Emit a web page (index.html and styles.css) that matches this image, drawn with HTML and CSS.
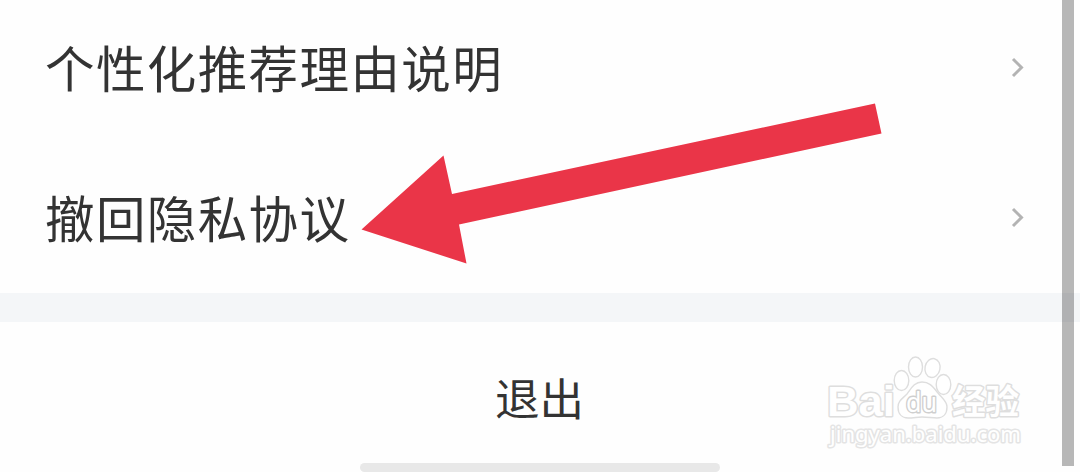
FILE: index.html
```html
<!DOCTYPE html>
<html lang="zh-CN">
<head>
<meta charset="utf-8">
<title>设置</title>
<link rel="stylesheet" href="styles.css">
</head>
<body>
<main class="screen">
  <ul class="list">
    <li class="row">
      <span class="label">个性化推荐理由说明</span>
      <svg class="chevron" viewBox="0 0 14 22"><path d="M2 2L10.500 10.500L2 19"/></svg>
    </li>
    <li class="row">
      <span class="label">撤回隐私协议</span>
      <svg class="chevron" viewBox="0 0 14 22"><path d="M2 2L10.500 10.500L2 19"/></svg>
    </li>
  </ul>
  <div class="divider"></div>
  <button class="logout">退出</button>
  <div class="home-bar"></div>
  <div class="scrollbar"></div>
  <svg class="arrow" viewBox="0 0 522 162"><path d="M0.500 126.500L82.500 52.500L91 91L514 0.500L520.500 30.500L98 121.500L105.500 160.500Z"/></svg>
  <svg class="watermark" viewBox="0 0 220 110">
    <text class="wm-latin" x="7" y="71" textLength="68" lengthAdjust="spacingAndGlyphs">Bai</text>
    <text class="wm-cn" x="132" y="69" textLength="67" lengthAdjust="spacingAndGlyphs">经验</text>
    <ellipse cx="81.500" cy="35.500" rx="7.300" ry="10"/>
    <ellipse cx="95.500" cy="22" rx="7" ry="10"/>
    <ellipse cx="112.500" cy="23" rx="7.500" ry="9.500" transform="rotate(12 112.500 23)"/>
    <ellipse cx="123.500" cy="39.500" rx="7.300" ry="10"/>
    <path d="M102 37C94 37 91 44 87 49C82 54 78 56 78 62C78 69 82 73 88 73C94 73 97 72 102 72C108 72 112 73 117 73C123 73 127 69 127 62C127 56 122 53 118 48C113 42 110 37 102 37Z"/>
    <text class="wm-du" x="86" y="66.500" textLength="31" lengthAdjust="spacingAndGlyphs">du</text>
    <text class="wm-url" x="10" y="97" textLength="191" lengthAdjust="spacingAndGlyphs">jingyan.baidu.com</text>
  </svg>
</main>
</body>
</html>
```
FILE: styles.css
```css
body {
  margin: 0;
  background: #fefefe;
}

.screen {
  position: relative;
  display: flex;
  flex-direction: column;
  width: 1080px;
  height: 472px;
  overflow: hidden;
  color: #333;
  font-family: "Noto Sans CJK SC", sans-serif;
}

.list {
  margin: -7px 0 0;
  padding: 0;
  list-style: none;
}

.row {
  display: flex;
  align-items: center;
  justify-content: space-between;
  box-sizing: border-box;
  height: 150px;
  padding: 0 55px 0 45px;
}

.label {
  padding-bottom: 2px;
  font-size: 49.5px;
  font-weight: 400;
  line-height: 72px;
  letter-spacing: 1.4px;
}

.chevron {
  width: 14px;
  height: 22px;
  fill: none;
  stroke: #b3b3b3;
  stroke-width: 3;
}

.divider {
  flex: none;
  height: 29px;
  background: #f4f6f8;
}

.logout {
  height: 141px;
  padding: 9px 1px 0 0;
  border: 0;
  background: none;
  color: inherit;
  font: 44.5px/64px "Noto Sans CJK SC", sans-serif;
}

.home-bar {
  flex: none;
  align-self: center;
  width: 360px;
  height: 9px;
  border-radius: 5px;
  background: #e8e8e8;
}

.scrollbar {
  position: absolute;
  top: 0;
  right: 6px;
  width: 12px;
  height: 466px;
  background: rgba(0, 0, 0, 0.28);
}

.arrow {
  position: absolute;
  left: 361px;
  top: 103px;
  width: 522px;
  height: 162px;
  fill: #ea3548;
}

.watermark {
  position: absolute;
  left: 820px;
  top: 345px;
  width: 220px;
  height: 110px;
  fill: #fff;
  stroke: #dedede;
  stroke-width: 1.4;
}

.watermark text {
  paint-order: stroke;
  stroke-width: 3;
  stroke-linejoin: round;
}

.watermark .wm-latin {
  font: bold 43px "Liberation Sans", sans-serif;
}

.watermark .wm-cn {
  font: 700 34px "Noto Sans CJK SC", sans-serif;
}

.watermark .wm-du {
  stroke: #cfcfcf;
  font: 27px "Noto Sans", sans-serif;
}

.watermark .wm-url {
  stroke: #e4e4e4;
  font: 21px "Noto Sans", sans-serif;
}
```
